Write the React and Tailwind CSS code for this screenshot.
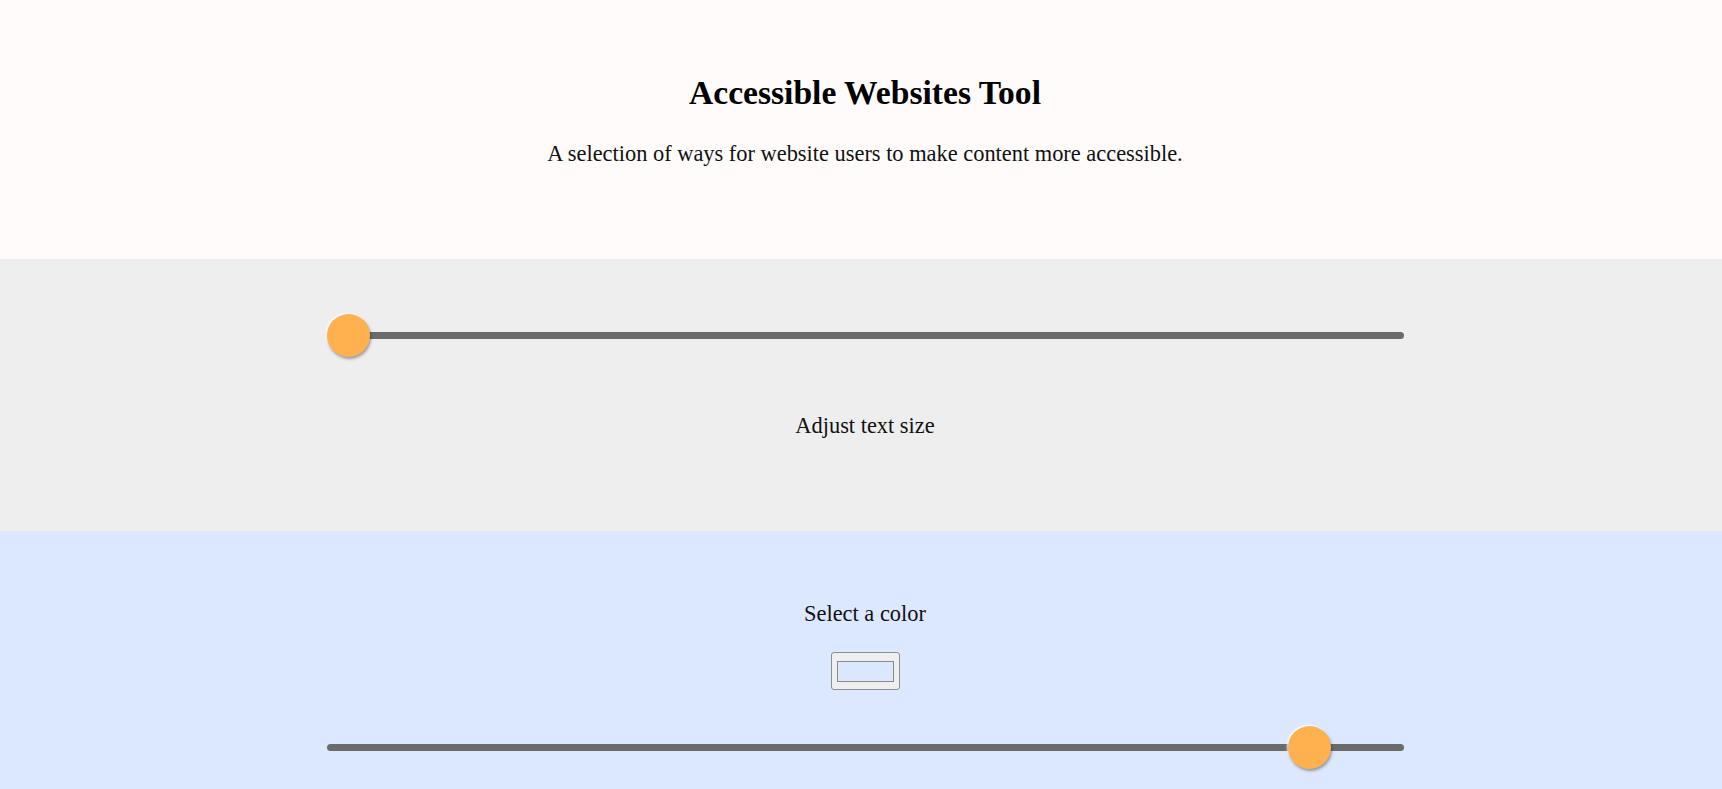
import React from 'react';

const Slider = ({ value }) => {
  // thumb travels over track width minus its own size
  const left = (value / 100) * (1077 - 43);
  return (
    <div className="relative flex items-center w-[1077px] h-[43px]">
      <div className="w-full h-[7px] rounded-full bg-[#6b6b6b]" />
      <div
        className="absolute top-0 w-[43px] h-[43px] rounded-full bg-[#ffb04f] shadow-[1px_2px_3px_rgba(0,0,0,0.35),-1px_-1px_2px_#ffffff]"
        style={{ left }}
      />
    </div>
  );
};

const App = () => {
  return (
    <div className="min-h-screen text-black font-['Liberation_Serif','Times_New_Roman',serif]">
      <header className="h-[259px] bg-[#fffbfa] pl-2 flex flex-col items-center">
        <h1 className="pt-[74px] text-[33.6px] leading-[38px] font-bold">Accessible Websites Tool</h1>
        <p className="mt-[29px] text-[22.4px] leading-[26px] text-[#111]">
          A selection of ways for website users to make content more accessible.
        </p>
      </header>

      <section className="h-[272px] bg-[#eeeeee] pl-2 pt-[55px] flex flex-col items-center">
        <Slider value={0} />
        <p className="mt-[56px] text-[22.4px] leading-[26px] text-[#111]">Adjust text size</p>
      </section>

      <section className="h-[300px] bg-[#dce8fd] pl-2 pt-[70px] flex flex-col items-center">
        <p className="text-[22.4px] leading-[26px] text-[#111]">Select a color</p>
        <div className="mt-[25px] w-[69px] h-[38px] rounded-[3px] border border-[#8f8f8f] bg-[#efefef] flex items-center justify-center">
          <div className="w-[57px] h-[21px] border border-[#8a8a8a] bg-[#dce8fd]" />
        </div>
        <div className="mt-[36px]">
          <Slider value={93} />
        </div>
      </section>
    </div>
  );
};

export default App;
